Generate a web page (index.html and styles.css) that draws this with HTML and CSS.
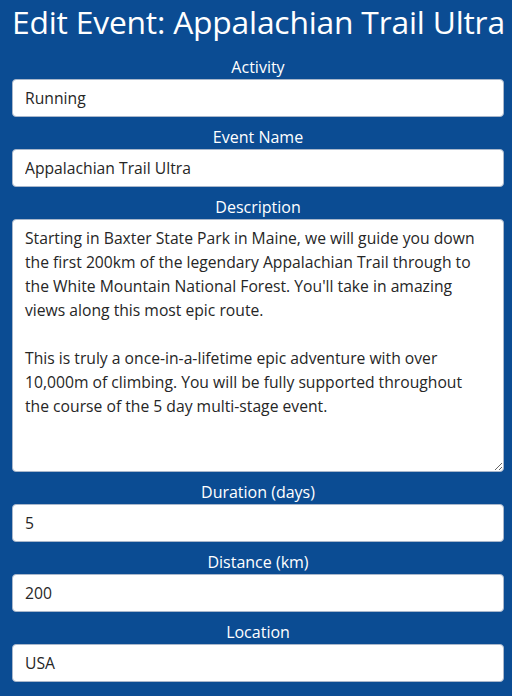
FILE: index.html
```html
<!DOCTYPE html>
<html lang="en">
<head>
<meta charset="utf-8">
<title>Edit Event</title>
<link rel="stylesheet" href="styles.css">
</head>
<body>
<main class="page">
  <h1 class="title">Edit Event: Appalachian Trail Ultra</h1>
  <form class="form">
    <div class="group">
      <label class="label" for="activity">Activity</label>
      <input class="control" id="activity" type="text" value="Running">
    </div>
    <div class="group">
      <label class="label" for="name">Event Name</label>
      <input class="control" id="name" type="text" value="Appalachian Trail Ultra">
    </div>
    <div class="group">
      <label class="label" for="desc">Description</label>
      <textarea class="control area" id="desc">Starting in Baxter State Park in Maine, we will guide you down the first 200km of the legendary Appalachian Trail through to the White Mountain National Forest. You'll take in amazing views along this most epic route.

This is truly a once-in-a-lifetime epic adventure with over 10,000m of climbing. You will be fully supported throughout the course of the 5 day multi-stage event.</textarea>
    </div>
    <div class="group">
      <label class="label" for="duration">Duration (days)</label>
      <input class="control" id="duration" type="text" value="5">
    </div>
    <div class="group">
      <label class="label" for="distance">Distance (km)</label>
      <input class="control" id="distance" type="text" value="200">
    </div>
    <div class="group">
      <label class="label" for="location">Location</label>
      <input class="control" id="location" type="text" value="USA">
    </div>
  </form>
</main>
</body>
</html>
```
FILE: styles.css
```css
html, body {
  margin: 0;
  padding: 0;
  background: #0b4c93;
}
body {
  font-family: "Open Sans", "Liberation Sans", sans-serif;
  color: #ffffff;
  overflow: hidden;
}
.page {
  padding: 0 8px 0 12px;
}
.title {
  margin: 0;
  padding-top: 2px;
  font-size: 31.8px;
  line-height: 40px;
  font-weight: 400;
  text-align: center;
  white-space: nowrap;
  letter-spacing: -0.2px;
}
.form {
  display: flex;
  flex-direction: column;
  padding-top: 13px;
  gap: 8px;
}
.group {
  display: flex;
  flex-direction: column;
}
.label {
  display: block;
  text-align: center;
  font-size: 16px;
  line-height: 24px;
}
.control {
  box-sizing: border-box;
  width: 492px;
  height: 38px;
  flex: none;
  margin: 0;
  padding: 6px 12px;
  border: 1px solid #a9b7cb;
  border-radius: 4px;
  background: #ffffff;
  color: #262626;
  font-family: "Open Sans", "Liberation Sans", sans-serif;
  font-size: 15.7px;
  line-height: 24px;
  outline: none;
}
.area {
  height: 253px;
  padding-right: 15px;
  resize: vertical;
  display: block;
}
```
